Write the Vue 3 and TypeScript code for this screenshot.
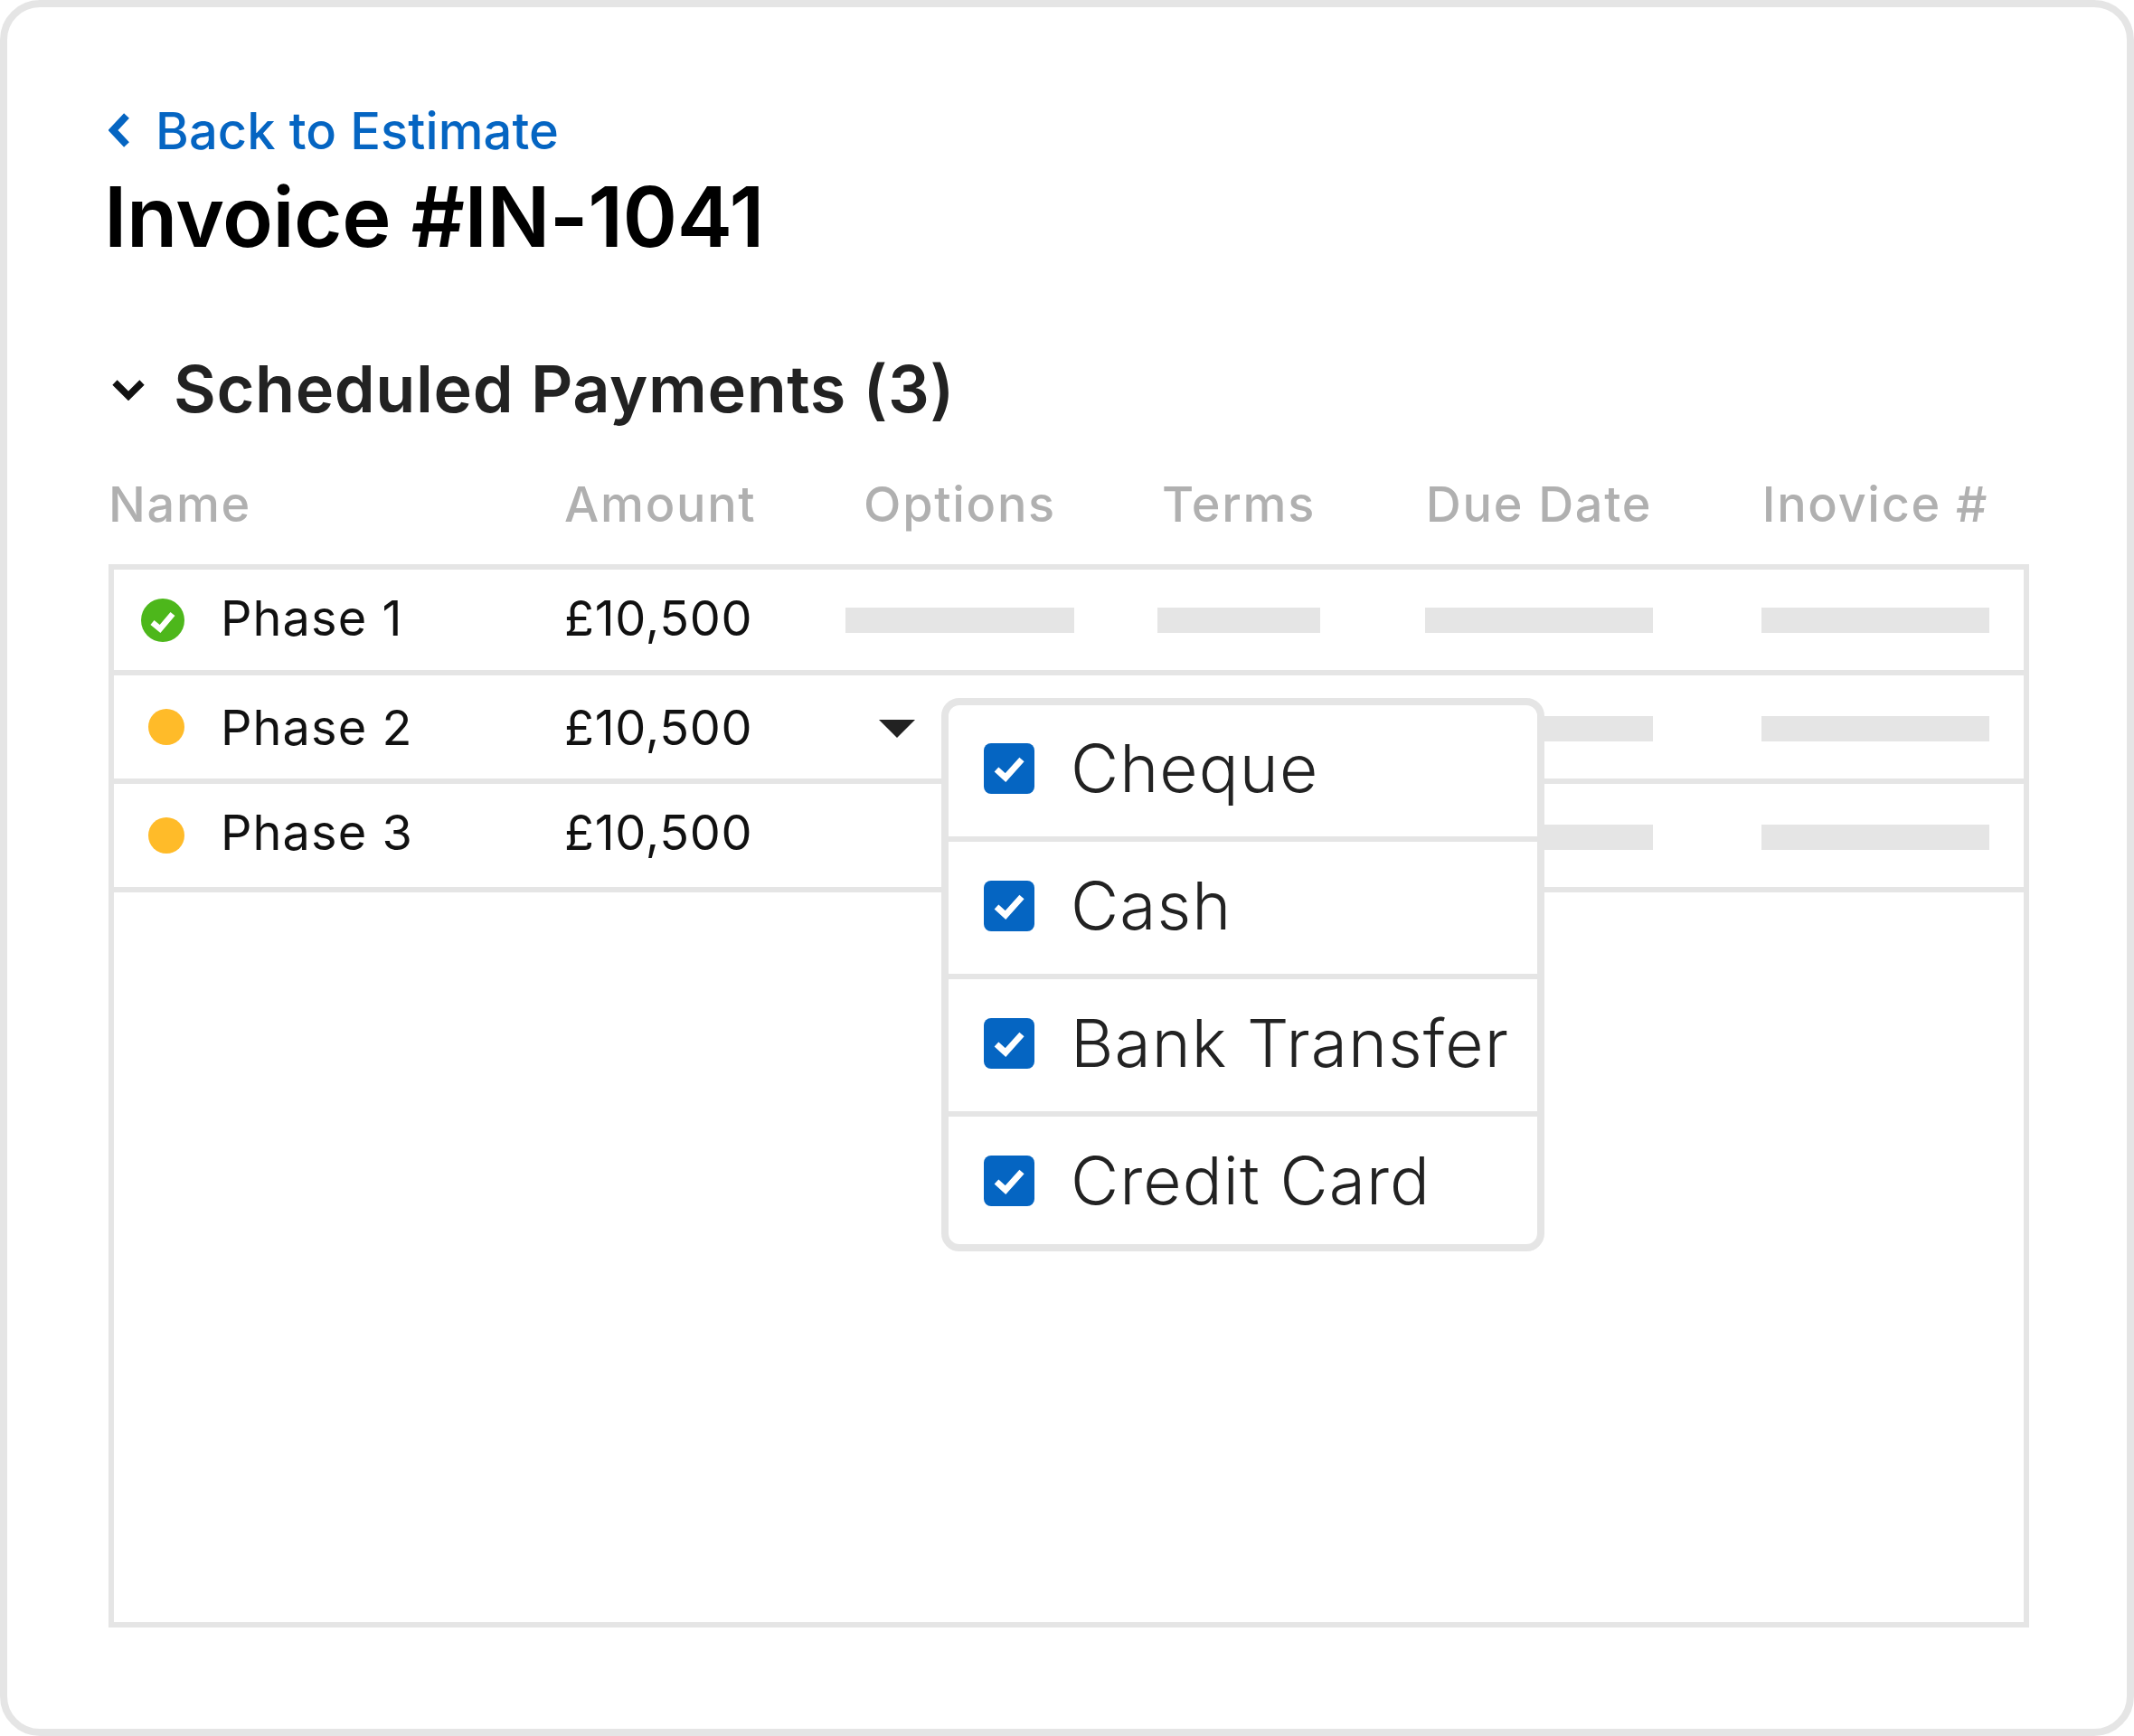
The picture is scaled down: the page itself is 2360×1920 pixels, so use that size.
<script setup lang="ts">
interface Phase {
  name: string;
  amount: string;
  done: boolean;
  open: boolean;
  showOption: boolean;
}

const columns = ['Name', 'Amount', 'Options', 'Terms', 'Due Date', 'Inovice #'];

const phases: Phase[] = [
  { name: 'Phase 1', amount: '£10,500', done: true, open: false, showOption: true },
  { name: 'Phase 2', amount: '£10,500', done: false, open: true, showOption: false },
  { name: 'Phase 3', amount: '£10,500', done: false, open: false, showOption: false },
];

const optionBar = 253;
const barWidths = [180, 252, 252];

const paymentOptions = ['Cheque', 'Cash', 'Bank Transfer', 'Credit Card'];
</script>

<template>
  <div class="frame">
    <a class="back">
      <svg class="back-icon" width="24" height="38" viewBox="0 0 24 38">
        <path d="M20 3 L5 19 L20 35" fill="none" stroke="#0565c2" stroke-width="8" />
      </svg>
      <span>Back to Estimate</span>
    </a>
    <h1 class="title">Invoice #IN-1041</h1>

    <h2 class="section">
      <svg class="section-icon" width="36" height="24" viewBox="0 0 36 24">
        <path d="M3 4 L18 19 L33 4" fill="none" stroke="#111" stroke-width="7.5" />
      </svg>
      <span>Scheduled Payments (3)</span>
    </h2>

    <div class="head grid">
      <div v-for="(col, i) in columns" :key="col" class="head-cell" :class="{ left: i < 2 }">{{ col }}</div>
    </div>

    <div class="table">
      <div v-for="(phase, i) in phases" :key="phase.name" class="row grid" :class="`row-${i + 1}`">
        <div class="name">
          <span class="status">
            <svg v-if="phase.done" width="48" height="48" viewBox="0 0 48 48">
              <circle cx="24" cy="24" r="24" fill="#4db71b" />
              <path d="M12.5 26.5 L21 33.5 L35 17" fill="none" stroke="#fff" stroke-width="6.5" />
            </svg>
            <i v-else class="dot"></i>
          </span>
          <span class="label">{{ phase.name }}</span>
        </div>
        <div class="amount">{{ phase.amount }}</div>
        <div v-if="phase.open" class="options-cell"><i class="caret"></i></div>
        <div v-else-if="phase.showOption" class="bar-cell">
          <i class="bar" :style="{ width: optionBar + 'px' }"></i>
        </div>
        <div v-else></div>
        <div v-for="(w, j) in barWidths" :key="j" class="bar-cell">
          <i class="bar" :style="{ width: w + 'px' }"></i>
        </div>
      </div>

      <div class="menu">
        <label v-for="opt in paymentOptions" :key="opt" class="menu-item">
          <span class="checkbox">
            <svg width="56" height="56" viewBox="0 0 56 56">
              <path d="M14 29 L24 38 L42 18" fill="none" stroke="#fff" stroke-width="7" />
            </svg>
          </span>
          <span class="menu-text">{{ opt }}</span>
        </label>
      </div>
    </div>
  </div>
</template>

<style>
html,
body {
  margin: 0;
  background: #fff;
}
</style>

<style scoped>
.frame {
  box-sizing: border-box;
  width: 2360px;
  height: 1920px;
  padding: 109px 108px 0 112px;
  border: 8px solid #e5e5e5;
  border-radius: 44px;
  background: #fff;
  font-family: Inter, Lato, sans-serif;
  color: #111;
}

.back {
  display: flex;
  align-items: center;
  height: 56px;
  color: #0565c2;
  font-size: 56px;
  line-height: 56px;
  font-weight: 500;
  letter-spacing: 0.1px;
}

.back-icon {
  margin: -3px 28px 0 0;
}

.title {
  margin: 20px 0 0 -5px;
  font-size: 92px;
  line-height: 94px;
  font-weight: 600;
  letter-spacing: -0.5px;
  color: #000;
}

.section {
  display: flex;
  align-items: center;
  margin: 107px 0 0;
  font-size: 72px;
  line-height: 72px;
  font-weight: 600;
  letter-spacing: 0.6px;
  color: #222;
}

.section-icon {
  margin: 2px 32px 0 4px;
}

.grid {
  display: grid;
  grid-template-columns: 500px 251px 369px 248px 416px 328px;
  align-items: center;
}

.head {
  margin: 65px 0 39px;
  padding: 0 6px;
  font-size: 54px;
  line-height: 54px;
  font-weight: 500;
  letter-spacing: 1.7px;
  color: #b0b0b0;
}

.head-cell {
  text-align: center;
}

.head-cell.left {
  text-align: left;
}

.head-cell:first-child {
  margin-left: -6px;
}

.head-cell:nth-child(2) {
  margin-left: -2px;
}

.table {
  position: relative;
  box-sizing: border-box;
  height: 1176px;
  border: 6px solid #e5e5e5;
}

.row {
  box-sizing: border-box;
  height: 120px;
  border-bottom: 6px solid #e5e5e5;
  font-size: 54px;
  line-height: 54px;
}

.row-1 {
  height: 117px;
}

.row-1 .label,
.row-1 .amount {
  margin-top: -4px;
}

.row-2 .label,
.row-2 .amount {
  margin-top: 1px;
}

.row-2 .options-cell,
.row-2 .bar-cell,
.row-3 .bar-cell {
  margin-top: 4px;
}

.row-3 .label,
.row-3 .amount {
  margin-top: -6px;
}

.name {
  display: flex;
  align-items: center;
}

.label {
  letter-spacing: 1.1px;
}

.amount {
  margin-left: -2px;
  letter-spacing: 0.7px;
}

.status {
  display: flex;
  justify-content: flex-end;
  width: 78px;
  margin-right: 40px;
}

.dot {
  display: block;
  width: 40px;
  height: 40px;
  border-radius: 50%;
  background: #ffbb29;
}

.options-cell {
  display: flex;
  padding-left: 95px;
}

.caret {
  width: 0;
  height: 0;
  border-left: 20px solid transparent;
  border-right: 20px solid transparent;
  border-top: 20px solid #222;
}

.bar-cell {
  display: flex;
  justify-content: center;
}

.bar {
  display: block;
  height: 28px;
  background: #e5e5e5;
}

.menu {
  position: absolute;
  left: 915px;
  top: 142px;
  box-sizing: border-box;
  width: 667px;
  height: 612px;
  border: 8px solid #e5e5e5;
  border-radius: 20px;
  background: #fff;
}

.menu-item {
  display: flex;
  box-sizing: border-box;
  height: 152px;
  padding: 43px 0 0 39px;
  border-bottom: 6px solid #e5e5e5;
}

.menu-item:first-child {
  height: 151px;
  padding-top: 42px;
}

.menu-item:last-child {
  height: 140px;
  border-bottom: 0;
}

.checkbox {
  display: block;
  width: 56px;
  height: 56px;
  border-radius: 8px;
  background: #0565c2;
}

.checkbox svg {
  display: block;
}

.menu-text {
  margin-left: 40px;
  font-size: 73px;
  line-height: 56px;
  font-weight: 300;
  letter-spacing: 1.1px;
  color: #222;
}
</style>
